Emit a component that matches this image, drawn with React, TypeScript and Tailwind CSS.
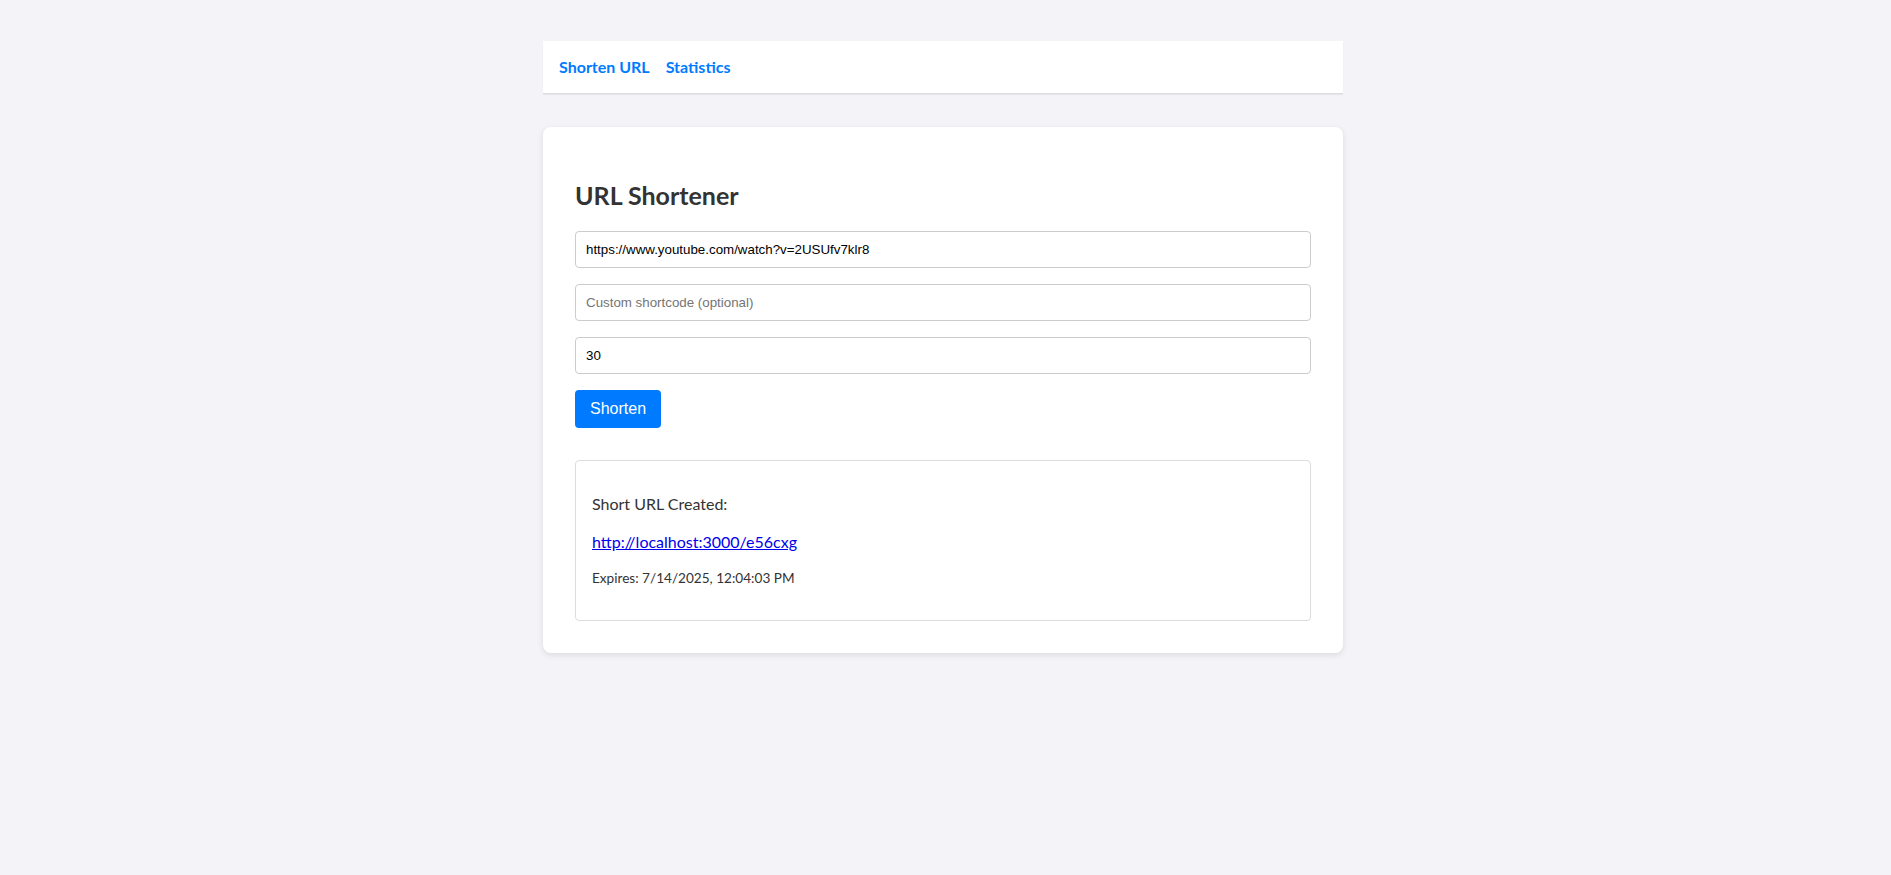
import React from "react";

export default function App() {
  return (
    <div className="min-h-[875px] w-full bg-[#f3f3f8] pt-[41px] pr-[5px] font-['Lato',sans-serif] text-[#333]">
      <div className="mx-auto w-[800px]">
        <nav className="flex gap-4 border-b border-[#dcdcdc] bg-white px-4 py-[15px] shadow-[0_1px_1px_rgba(0,0,0,0.05)]">
          <a className="text-[16px] leading-[22px] font-bold text-[#007bff]" href="#">Shorten URL</a>
          <a className="text-[16px] leading-[22px] font-bold text-[#007bff]" href="#">Statistics</a>
        </nav>
        <div className="mt-[33px] rounded-lg bg-white p-8 shadow-[0_2px_6px_rgba(0,0,0,0.1)]">
          <h2 className="my-5 text-[25px] leading-[32px] font-bold text-[#333]">URL Shortener</h2>
          <input
            className="mb-4 block w-full rounded border border-[#ccc] px-[10px] py-[10px] font-['Liberation_Sans',Arial,sans-serif] text-[13.33px] leading-[15px] text-black placeholder:text-[#757575] outline-none"
            defaultValue="https://www.youtube.com/watch?v=2USUfv7klr8"
          />
          <input
            className="mb-4 block w-full rounded border border-[#ccc] px-[10px] py-[10px] font-['Liberation_Sans',Arial,sans-serif] text-[13.33px] leading-[15px] text-black placeholder:text-[#757575] outline-none"
            placeholder="Custom shortcode (optional)"
          />
          <input
            className="mb-4 block w-full rounded border border-[#ccc] px-[10px] py-[10px] font-['Liberation_Sans',Arial,sans-serif] text-[13.33px] leading-[15px] text-black placeholder:text-[#757575] outline-none"
            defaultValue="30"
          />
          <button className="rounded bg-[#007bff] px-[15px] py-[10px] font-['Liberation_Sans',Arial,sans-serif] text-[16px] leading-[18px] text-white">
            Shorten
          </button>
          <div className="mt-8 rounded border border-[#ddd] px-4 py-4">
            <p className="my-4 text-[16px] leading-[22px]">Short URL Created:</p>
            <p className="my-4 text-[16px] leading-[22px]">
              <a className="text-[#0000ee] underline" href="#">http://localhost:3000/e56cxg</a>
            </p>
            <p className="my-4 text-[13.6px] leading-[19px]">Expires: 7/14/2025, 12:04:03 PM</p>
          </div>
        </div>
      </div>
    </div>
  );
}
